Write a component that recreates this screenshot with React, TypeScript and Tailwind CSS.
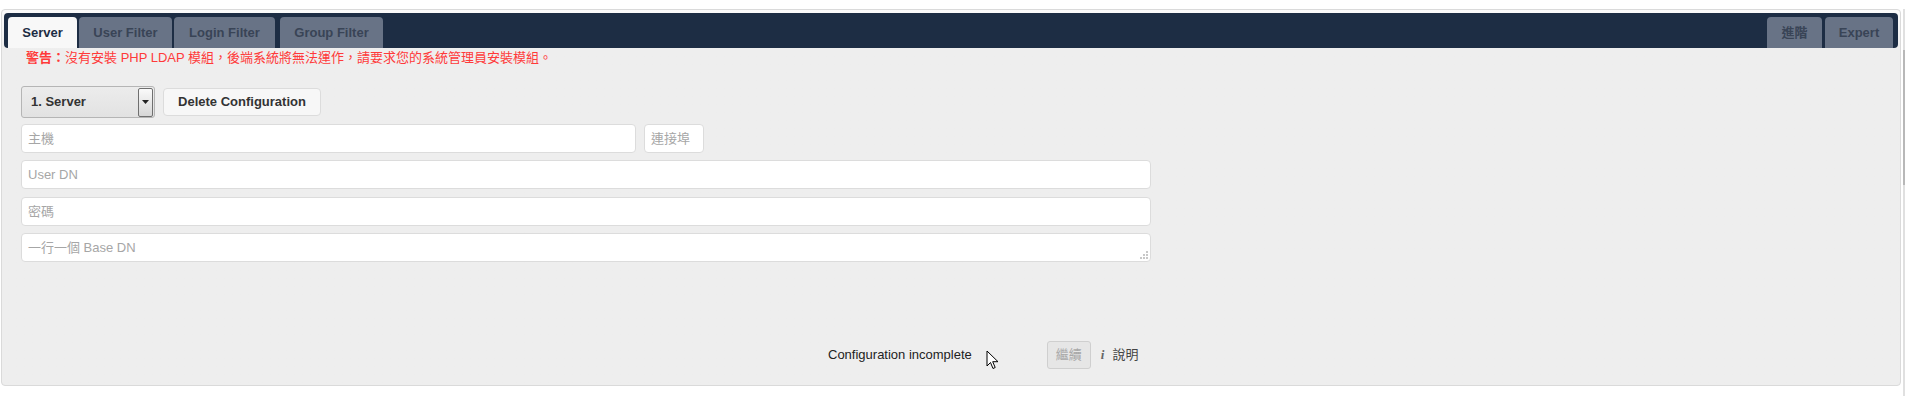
import React from "react";

const font = { fontFamily: '"Liberation Sans", Arial, "Noto Sans CJK TC", sans-serif' };

function Tab({ label, w, active }: { label: string; w: number; active?: boolean }) {
  return (
    <div
      style={{ width: w }}
      className={
        "h-[31px] rounded-t-[4px] flex items-center justify-center text-[13px] font-bold " +
        (active ? "bg-[#f8f8f8] text-[#1d2d44]" : "bg-[#687386] text-[#394456]")
      }
    >
      {label}
    </div>
  );
}

function Input({ ph, w, textarea }: { ph: string; w: number; textarea?: boolean }) {
  return (
    <div
      style={{ width: w }}
      className="relative h-[29px] bg-white border border-[#dcdcdc] rounded-[4px] flex items-center pl-[6px] text-[13px] text-[#a6a6a6]"
    >
      {ph}
      {textarea && (
        <svg className="absolute right-[1px] bottom-[1px]" width="11" height="11" viewBox="0 0 11 11">
          <g fill="#c8c8c8">
            <rect x="8" y="2" width="2" height="2" />
            <rect x="5" y="5" width="2" height="2" />
            <rect x="8" y="5" width="2" height="2" />
            <rect x="2" y="8" width="2" height="2" />
            <rect x="5" y="8" width="2" height="2" />
            <rect x="8" y="8" width="2" height="2" />
          </g>
        </svg>
      )}
    </div>
  );
}

export default function App() {
  return (
    <div style={font} className="w-[1906px] h-[396px] bg-white flex relative overflow-hidden">
      <div className="w-[1901px] pt-[9px] pl-[1px]">
        <div className="w-[1900px] h-[377px] border border-[#dadada] rounded-[4px] bg-[#eeeeee] p-[2px] pt-[3px] flex flex-col bg-gradient-to-b from-[#fbfbfb] to-[#eeeeee] to-[40px]">
          {/* header */}
          <div className="h-[35px] bg-[#1d2d44] rounded-[4px] flex items-end px-[4px] justify-between">
            <div className="flex gap-[2px]">
              <Tab label="Server" w={69} active />
              <Tab label="User Filter" w={93} />
              <Tab label="Login Filter" w={101} />
              <div className="w-[1px]" />
              <Tab label="Group Filter" w={103} />
            </div>
            <div className="flex gap-[3px] pr-[1px]">
              <Tab label="進階" w={55} />
              <Tab label="Expert" w={68} />
            </div>
          </div>
          {/* warning */}
          <div className="mt-[2px] pl-[22px] h-[16px] leading-[16px] text-[13px] text-[#ff3a3a]">
            <span className="font-bold">警告：</span>沒有安裝 PHP LDAP 模組，後端系統將無法運作，請要求您的系統管理員安裝模組。
          </div>
          <div className="pl-[17px] flex flex-col">
            <div className="mt-[20px] flex items-center gap-[8px]">
              <div className="w-[134px] h-[32px] border border-[#b5b5b5] rounded-[3px] bg-gradient-to-b from-[#ececec] to-[#e2e2e2] flex items-center justify-between pl-[9px] pr-[1px]">
                <span className="text-[13px] font-bold text-[#333]">1. Server</span>
                <div className="w-[15px] h-[29px] border border-[#6f6f6f] rounded-[2px] bg-gradient-to-b from-[#fafafa] to-[#d6d6d6] flex items-center justify-center">
                  <svg width="7" height="4" viewBox="0 0 7 4"><path d="M0 0h7L3.5 4z" fill="#222" /></svg>
                </div>
              </div>
              <div className="w-[158px] h-[28px] border border-[#dcdcdc] rounded-[4px] bg-[#f7f7f7] flex items-center justify-center text-[13px] font-bold text-[#333]">
                Delete Configuration
              </div>
            </div>
            <div className="mt-[6px] flex gap-[8px]">
              <Input ph="主機" w={615} />
              <Input ph="連接埠" w={60} />
            </div>
            <div className="mt-[7px]"><Input ph="User DN" w={1130} /></div>
            <div className="mt-[8px]"><Input ph="密碼" w={1130} /></div>
            <div className="mt-[7px]"><Input ph="一行一個 Base DN" w={1130} textarea /></div>
          </div>
          {/* bottom */}
          <div className="mt-[79px] flex items-center h-[28px] pl-[824px]">
            <span className="text-[13px] text-[#222]">Configuration incomplete</span>
            <svg className="ml-[14px] mt-[10px]" width="13" height="20" viewBox="0 0 13 20">
              <path d="M1 1v15l3.5-3.5 2.5 6 2.2-1-2.5-5.8H12z" fill="#fff" stroke="#000" strokeWidth="1" strokeLinejoin="round" />
            </svg>
            <div className="ml-[48px] w-[44px] h-[28px] border border-[#cfcfcf] rounded-[3px] bg-[#e6e6e6] flex items-center justify-center text-[13px] text-[#a8a8a8]">
              繼續
            </div>
            <span className="ml-[10px] text-[13px] italic font-bold text-[#666]" style={{ fontFamily: '"Liberation Serif", serif' }}>i</span>
            <span className="ml-[8px] text-[13px] text-[#444]">說明</span>
          </div>
        </div>
      </div>
      {/* scrollbar line */}
      <div className="absolute right-[1px] top-[9px] bottom-0 w-[2px] bg-[#e0e0e0]">
        <div className="mt-[41px] h-[135px] bg-[#b8b8b8]" />
      </div>
    </div>
  );
}
